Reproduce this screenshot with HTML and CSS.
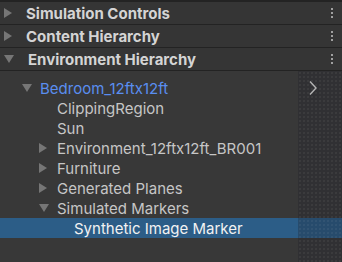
FILE: index.html
```html
<!DOCTYPE html>
<html lang="en">
<head>
    <meta charset="UTF-8">
    <meta name="viewport" content="width=device-width, initial-scale=1.0">
    <title>Hierarchy</title>
    <link rel="stylesheet" href="styles.css">
</head>
<body>
    <div class="panel">
        <div class="header">
            <span class="arrow right"></span>
            <span class="title">Simulation Controls</span>
            <span class="menu"><i></i><i></i><i></i></span>
        </div>
        <div class="header">
            <span class="arrow right"></span>
            <span class="title">Content Hierarchy</span>
            <span class="menu"><i></i><i></i><i></i></span>
        </div>
        <div class="header">
            <span class="arrow down"></span>
            <span class="title">Environment Hierarchy</span>
            <span class="menu"><i></i><i></i><i></i></span>
        </div>

        <div class="tree">
            <div class="row lvl0">
                <span class="arrow down"></span>
                <span class="label root">Bedroom_12ftx12ft</span>
            </div>
            <div class="row lvl1">
                <span class="arrow none"></span>
                <span class="label">ClippingRegion</span>
            </div>
            <div class="row lvl1">
                <span class="arrow none"></span>
                <span class="label">Sun</span>
            </div>
            <div class="row lvl1">
                <span class="arrow right"></span>
                <span class="label">Environment_12ftx12ft_BR001</span>
            </div>
            <div class="row lvl1">
                <span class="arrow right"></span>
                <span class="label">Furniture</span>
            </div>
            <div class="row lvl1">
                <span class="arrow right"></span>
                <span class="label">Generated Planes</span>
            </div>
            <div class="row lvl1">
                <span class="arrow down"></span>
                <span class="label">Simulated Markers</span>
            </div>
            <div class="row lvl2 selected">
                <span class="arrow none"></span>
                <span class="label">Synthetic Image Marker</span>
            </div>

            <div class="side">
                <svg class="chevron" width="10" height="16" viewBox="0 0 10 16">
                    <path d="M2 1.5 L8 8 L2 14.5" fill="none" stroke="#b4b4b4" stroke-width="1.4"/>
                </svg>
            </div>
        </div>
    </div>
</body>
</html>
```

FILE: styles.css
```css
html, body {
    margin: 0;
    padding: 0;
    background: #383838;
    font-family: Inter, "Noto Sans", sans-serif;
}

.panel {
    width: 342px;
    height: 262px;
    overflow: hidden;
    border-top: 2px solid #232323;
    box-sizing: border-box;
}

.header {
    display: flex;
    align-items: center;
    height: 22px;
    border-bottom: 1px solid #232323;
    background: #353535;
}

.header .arrow {
    margin-left: 4px;
    margin-right: 14px;
}

.title {
    flex: 1;
    color: #d4d4d4;
    font-size: 15px;
    font-weight: 700;
}

.menu {
    display: flex;
    flex-direction: column;
    gap: 2px;
    width: 2px;
    margin-right: 9px;
}

.menu i {
    width: 2px;
    height: 2px;
    background: #a0a0a0;
}

.arrow {
    width: 0;
    height: 0;
    flex: none;
}

.arrow.right {
    border-top: 5px solid transparent;
    border-bottom: 5px solid transparent;
    border-left: 8px solid #767676;
}

.arrow.down {
    border-left: 5px solid transparent;
    border-right: 5px solid transparent;
    border-top: 8px solid #767676;
}

.arrow.none {
    width: 10px;
}

.tree {
    position: relative;
    padding-top: 7px;
    height: 200px;
}

.row {
    display: flex;
    align-items: center;
    height: 20px;
    color: #c6c6c6;
    font-size: 15px;
}

.row .arrow {
    margin-right: 8px;
}

.row .arrow.right {
    margin-right: 10px;
}

.lvl0 { padding-left: 22px; }
.lvl1 { padding-left: 39px; }
.lvl2 { padding-left: 56px; }

.label.root {
    color: #5a8ef0;
}

.row.selected {
    background: #2c5d87;
    color: #f2f2f2;
}

.side {
    position: absolute;
    top: 0;
    right: 0;
    bottom: 0;
    width: 44px;
    background-color: rgba(30, 30, 40, 0.28);
    background-image: radial-gradient(circle, rgba(255, 255, 255, 0.05) 0.7px, transparent 1px);
    background-size: 4px 4px;
}

.chevron {
    display: block;
    margin: 9px 0 0 10px;
}
```
